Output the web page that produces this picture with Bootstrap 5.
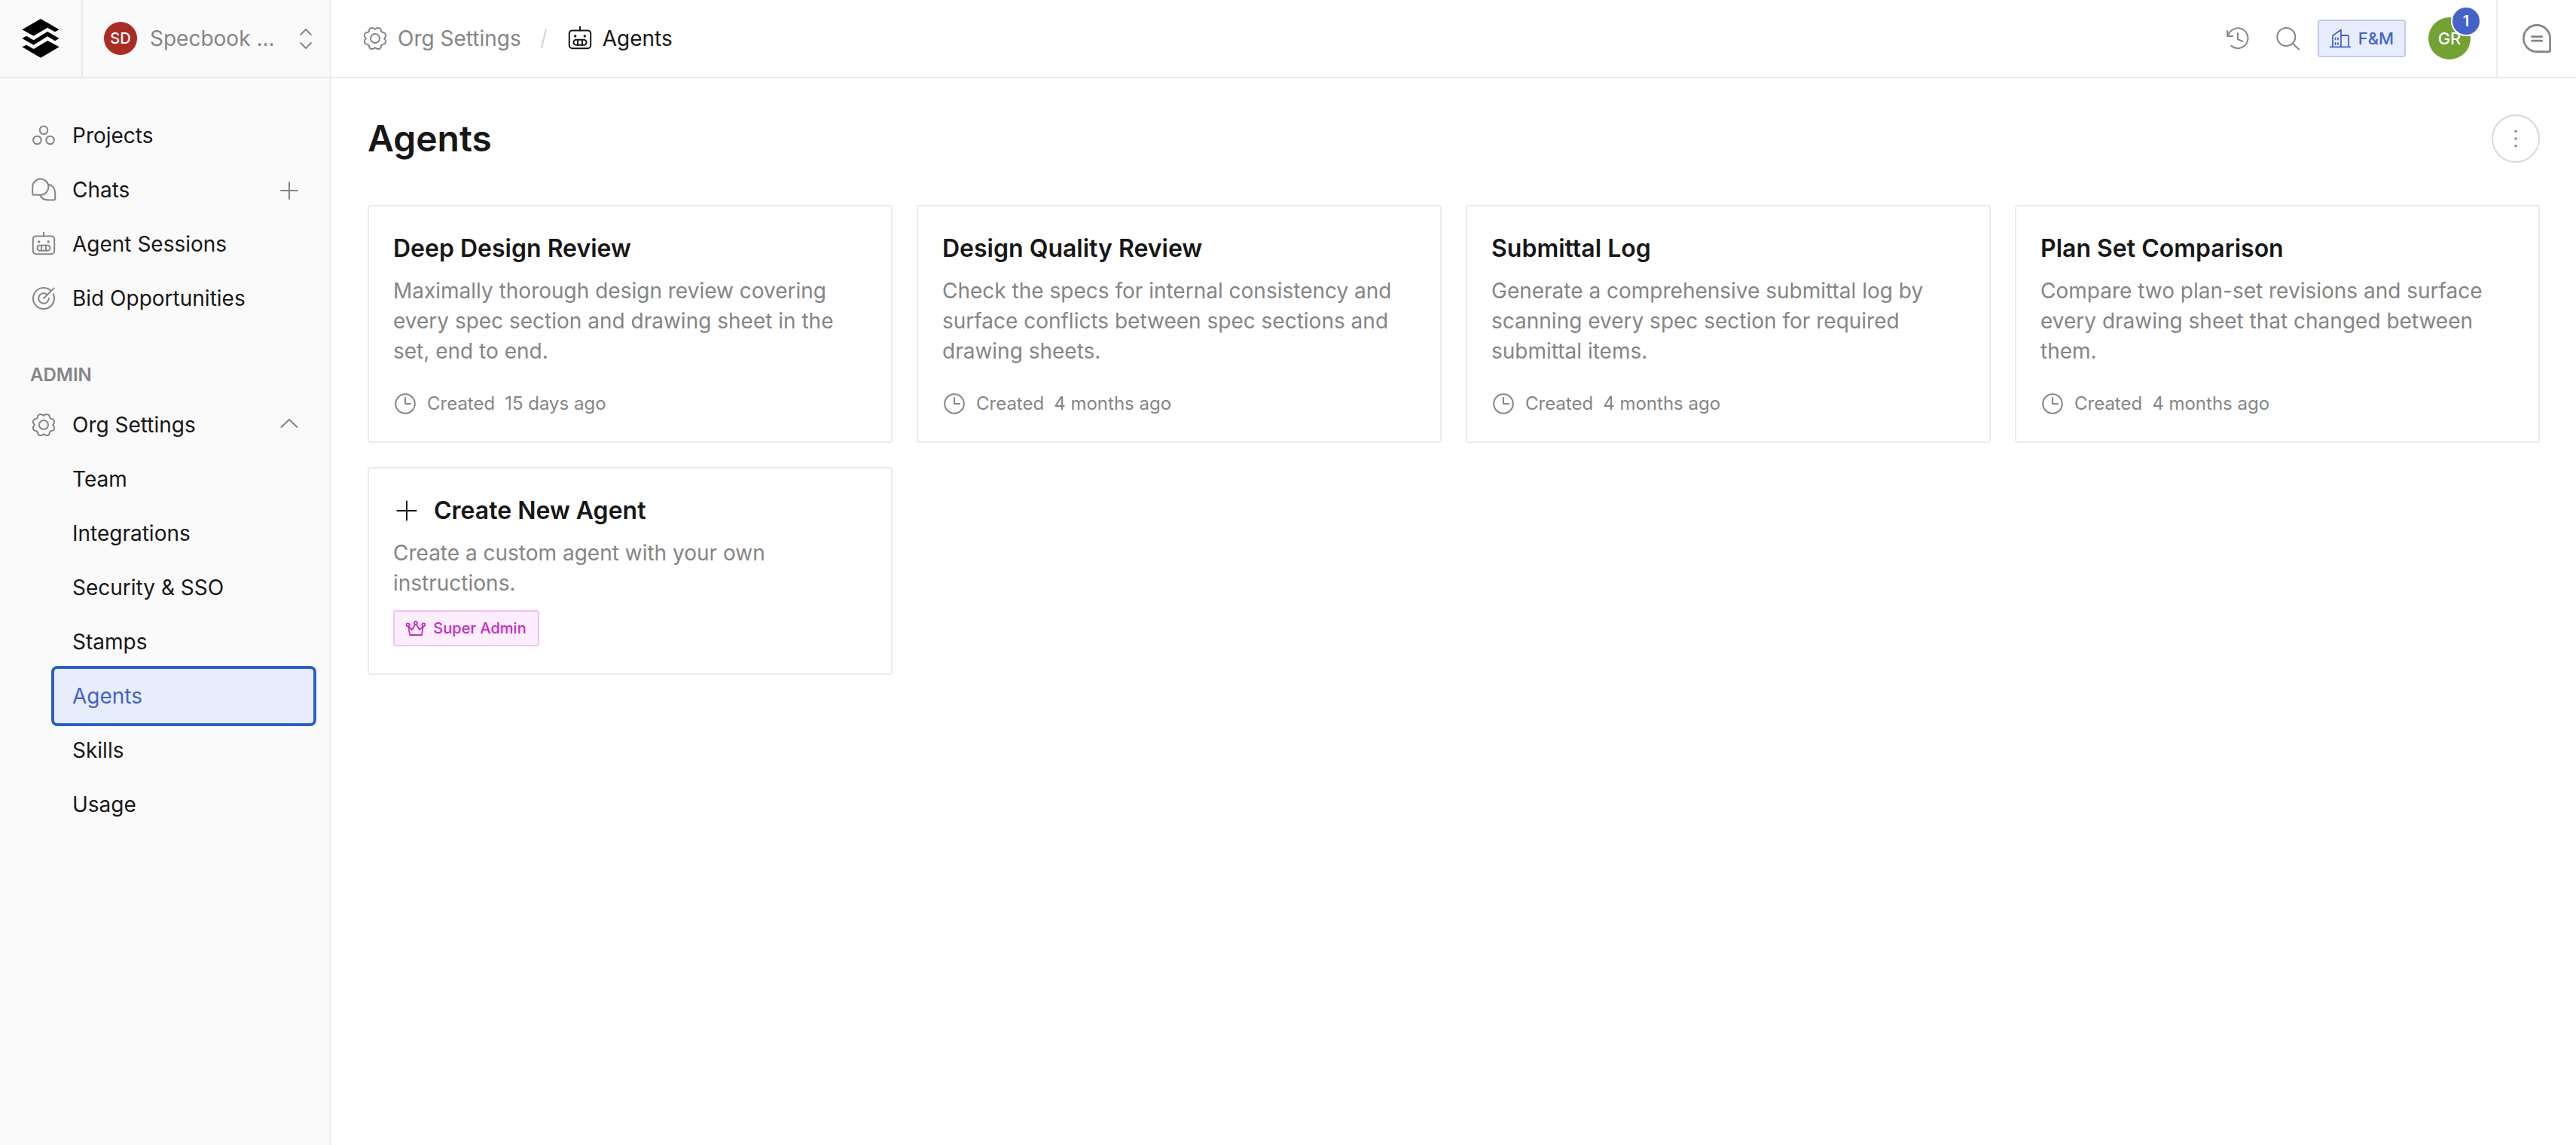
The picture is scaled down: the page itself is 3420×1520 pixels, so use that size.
<!DOCTYPE html>
<html lang="en">
<head>
<meta charset="utf-8">
<meta name="viewport" content="width=device-width, initial-scale=1">
<title>Agents</title>
<link href="https://cdn.jsdelivr.net/npm/bootstrap@5.3.0/dist/css/bootstrap.min.css" rel="stylesheet">
<style>
:root{--ink:#171717;--muted:#858585;--line:#ebebeb;--blue:#4562c8}
body{font-family:Inter,"Noto Sans",sans-serif;font-size:28px;line-height:40px;color:var(--ink);background:#fff}
svg{display:block;flex:none;fill:none;stroke:currentColor;stroke-width:2;stroke-linecap:round;stroke-linejoin:round;overflow:visible}
.dot{fill:currentColor;stroke:none}
.topbar{height:104px;border-bottom:2px solid var(--line)}
.muted{color:var(--muted)}
.side{width:440px;background:#fafafa;border-right:2px solid var(--line)}
.brand{width:110px;border-right:2px solid var(--line)}
.org{padding:0 15px 0 28px}
.org-name{margin-left:17px}
.avatar{width:44px;height:44px;border-radius:50%;background:#a92c25;color:#fff;font-size:20px;font-weight:500;line-height:1}
.user{width:56px;height:56px;background:#73a132;font-size:22px}
.count{width:36px;height:36px;border-radius:50%;background:var(--blue);color:#fff;font-size:20px;font-weight:600;line-height:1;top:-13px;right:-12px;box-shadow:0 0 0 2px #fff}
.side-nav{padding:40px 22px 0 26px}
.side-nav .nav-link{height:72px;padding:0 16px;color:var(--ink);border-radius:4px}
.side-nav .nav-link svg{color:var(--muted)}
.label{margin-left:22px}
.sub{margin-left:46px}
.sub .nav-link{padding:0 24px}
.sub .nav-link.active{background:#e8edfd;color:var(--blue);outline:4px solid #2860c8;box-shadow:0 0 0 6px #fff}
.group-title{height:61px;padding:0 14px;margin-top:35px;font-size:24px;font-weight:600;color:var(--muted)}
.crumbs{padding-left:42px}
.plan{width:117px;height:50px;margin-right:30px;border:2px solid #bfcbf2;border-radius:4px;background:#e8edfd;color:var(--blue);font-size:22px;line-height:1;font-weight:500}
.chat-cell{width:106px;border-left:2px solid var(--line)}
.page-body{padding:48px 48px 0}
.page-title{font-size:48px;line-height:64px;font-weight:600}
.more{width:64px;height:64px;border:2px solid #d9d9d9;border-radius:50%;color:var(--muted)}
.agents{--bs-gutter-x:32px;--bs-gutter-y:32px;margin-top:24px}
.agent{border:2px solid var(--line);border-radius:4px;padding:32px;height:316px}
.agent h2{font-size:32px;line-height:48px;font-weight:600;margin-bottom:12px}
.agent p{margin:0;color:var(--muted)}
.created{font-size:24px;line-height:36px;color:var(--muted)}
.agent-new{height:276px}
.role{width:194px;height:48px;margin-top:16px;border:2px solid #f4c0f4;border-radius:4px;background:#fceefd;color:#c829c8;font-size:20px;line-height:1;font-weight:500}
</style>
</head>
<body>
<svg width="0" height="0" class="position-absolute" aria-hidden="true">
  <symbol id="gear" viewBox="-16 -16 32 32">
    <g id="quarter"><path d="M0-12.4C1.5-12.4 1.8-14.2 3.4-14.1C5-14 7-13.4 7.4-12.5C7.9-11.2 7.5-9.9 8.7-8.7C9.9-7.5 11.2-7.9 12.5-7.4C13.4-7 14-5 14.1-3.4C14.2-1.8 12.4-1.5 12.4 0"/></g>
    <use href="#quarter" transform="rotate(90)"/><use href="#quarter" transform="rotate(180)"/><use href="#quarter" transform="rotate(270)"/>
    <circle r="6"/>
  </symbol>
  <symbol id="robot" viewBox="-16 -16 32 32">
    <rect x="-14.2" y="-10.6" width="28.4" height="23.8" rx="4"/><path d="M0-15.5V-10.6M-2.9 1.7v7M2.9 1.7v7"/>
    <rect x="-8.5" y="1.7" width="17" height="7" rx="3.5"/><circle class="dot" cx="-6.3" cy="-3" r="1.7"/><circle class="dot" cx="6.3" cy="-3" r="1.7"/>
  </symbol>
  <symbol id="clock" viewBox="-16 -16 32 32"><circle r="12.8"/><path d="M0-8V0H7"/></symbol>
</svg>

<div class="d-flex min-vh-100">
  <aside class="side flex-shrink-0">
    <div class="topbar d-flex">
      <a class="brand d-flex align-items-center justify-content-center" href="#" aria-label="Home">
        <svg width="50" height="52" viewBox="87 75 150 156" style="color:#000"><g class="dot"><path d="M162 75L236 118L219 127L189 110L134 143L88 118Z"/><path d="M88 153L105 143L134 160L189 126L236 153L219 163L189 145L134 179Z"/><path d="M88 187L105 179L134 195L190 162L236 187L162 230Z"/></g></svg>
      </a>
      <div class="org d-flex align-items-center flex-fill muted">
        <span class="avatar d-flex align-items-center justify-content-center">SD</span>
        <span class="org-name">Specbook ...</span>
        <svg class="ms-auto" width="34" height="32" viewBox="-17 -16 34 32"><path d="M-6.8-5L0-12L6.8-5M-6.8 6L0 13L6.8 6"/></svg>
      </div>
    </div>
    <nav class="side-nav nav flex-column flex-nowrap">
      <a class="nav-link d-flex align-items-center" href="#"><svg width="32" height="32" viewBox="-16 -16 32 32"><circle cy="-7.3" r="5.3"/><circle cx="-8.6" cy="6" r="5.3"/><circle cx="8.6" cy="6" r="5.3"/></svg><span class="label">Projects</span></a>
      <a class="nav-link d-flex align-items-center" href="#"><svg width="32" height="32" viewBox="-16 -16 32 32"><path d="M-14.8-3.8A10.6 10.6 0 1 1-4.4 6.8H-13.4q-1.4 0-1.4-1.4ZM5.6-7.2C11.4-6.5 15.2-2 15.2 4V12.2q0 1.4-1.4 1.4H6C1 13.6-3 11.2-4.8 7"/></svg><span class="label">Chats</span><svg class="ms-auto" width="32" height="32" viewBox="-16 -17 32 32"><path d="M-11 0H11M0-11V11"/></svg></a>
      <a class="nav-link d-flex align-items-center" href="#"><svg width="32" height="32"><use href="#robot"/></svg><span class="label">Agent Sessions</span></a>
      <a class="nav-link d-flex align-items-center" href="#"><svg width="32" height="32" viewBox="-16 -16 32 32"><path d="M12.8-5.6A14 14 0 1 1 8.6-11M6.8 0A6.8 6.8 0 1 1 3.2-6M0 0L13.6-13.4"/></svg><span class="label">Bid Opportunities</span></a>
      <div class="group-title d-flex align-items-center">ADMIN</div>
      <a class="nav-link d-flex align-items-center" href="#"><svg width="32" height="32"><use href="#gear"/></svg><span class="label">Org Settings</span><svg class="ms-auto" width="32" height="32" viewBox="-16 -16 32 32"><path d="M-10.5 3L0-7L10.5 3"/></svg></a>
      <div class="sub">
        <a class="nav-link d-flex align-items-center" href="#">Team</a>
        <a class="nav-link d-flex align-items-center" href="#">Integrations</a>
        <a class="nav-link d-flex align-items-center" href="#">Security &amp; SSO</a>
        <a class="nav-link d-flex align-items-center" href="#">Stamps</a>
        <a class="nav-link d-flex align-items-center active" href="#">Agents</a>
        <a class="nav-link d-flex align-items-center" href="#">Skills</a>
        <a class="nav-link d-flex align-items-center" href="#">Usage</a>
      </div>
    </nav>
  </aside>

  <div class="flex-fill">
    <header class="topbar d-flex">
      <div class="crumbs d-flex align-items-center flex-fill">
        <svg class="muted" width="32" height="32"><use href="#gear"/></svg>
        <span class="muted" style="margin-left:14px">Org Settings</span>
        <svg width="8" height="26" viewBox="0 0 8 26" style="color:#d2d2d2;margin:0 28px 0 26px"><path d="M1 25L7 1"/></svg>
        <svg width="32" height="32"><use href="#robot"/></svg>
        <span style="margin-left:14px">Agents</span>
      </div>
      <div class="d-flex align-items-center muted">
        <svg width="32" height="32" viewBox="-16 -16 32 32" style="margin-right:34px"><path d="M-13.8-10V-3H-6.8M-13-3.4A13.4 13.4 0 1 1-8.8 9.8M0-7V1.2L6 4"/></svg>
        <svg width="32" height="32" viewBox="-16 -16 32 32" style="margin-right:24px"><circle cx="-1.7" cy="-2" r="12"/><path d="M7 6.8L15 14.5"/></svg>
        <span class="plan d-flex align-items-center justify-content-center"><svg width="28" height="26" viewBox="0 0 28 26" style="margin-right:10px;stroke-width:1.8"><path d="M.8 24.4H27.2M4 24V9.4L15 1.6V24M15 9H23.6q1.4 0 1.4 1.4V24M7.6 12.4v2M11 12.4v2M7.6 19v2M11 19v2"/></svg>F&amp;M</span>
        <span class="avatar user d-flex align-items-center justify-content-center position-relative" style="margin-right:34px">GR<span class="count position-absolute d-flex align-items-center justify-content-center">1</span></span>
      </div>
      <div class="chat-cell d-flex align-items-center justify-content-center muted">
        <svg width="38" height="38" viewBox="-19 -19 38 38" style="stroke-width:2.7"><path d="M17.6 0V16q0 1.6-1.6 1.6H0A17.6 17.6 0 1 1 17.6 0ZM-6.6-2.4H6.8M-6.6 3.2H6.8"/></svg>
      </div>
    </header>

    <main class="page-body">
      <div class="d-flex align-items-center justify-content-between">
        <h1 class="page-title m-0">Agents</h1>
        <button class="more bg-transparent p-0 d-flex align-items-center justify-content-center" aria-label="More"><svg width="4" height="24" viewBox="-2 -12 4 24"><g class="dot"><circle cy="-9.7" r="1.7"/><circle r="1.7"/><circle cy="9.7" r="1.7"/></g></svg></button>
      </div>
      <div class="row agents">
        <div class="col-3"><article class="agent d-flex flex-column"><h2>Deep Design Review</h2><p>Maximally thorough design review covering<br>every spec section and drawing sheet in the<br>set, end to end.</p><div class="created d-flex align-items-center mt-auto"><svg width="32" height="32"><use href="#clock"/></svg><span style="margin:0 13px">Created</span><span>15 days ago</span></div></article></div>
        <div class="col-3"><article class="agent d-flex flex-column"><h2>Design Quality Review</h2><p>Check the specs for internal consistency and<br>surface conflicts between spec sections and<br>drawing sheets.</p><div class="created d-flex align-items-center mt-auto"><svg width="32" height="32"><use href="#clock"/></svg><span style="margin:0 13px">Created</span><span>4 months ago</span></div></article></div>
        <div class="col-3"><article class="agent d-flex flex-column"><h2>Submittal Log</h2><p>Generate a comprehensive submittal log by<br>scanning every spec section for required<br>submittal items.</p><div class="created d-flex align-items-center mt-auto"><svg width="32" height="32"><use href="#clock"/></svg><span style="margin:0 13px">Created</span><span>4 months ago</span></div></article></div>
        <div class="col-3"><article class="agent d-flex flex-column"><h2>Plan Set Comparison</h2><p>Compare two plan-set revisions and surface<br>every drawing sheet that changed between<br>them.</p><div class="created d-flex align-items-center mt-auto"><svg width="32" height="32"><use href="#clock"/></svg><span style="margin:0 13px">Created</span><span>4 months ago</span></div></article></div>
        <div class="col-3"><article class="agent agent-new"><h2 class="d-flex align-items-center"><svg width="36" height="36" viewBox="-18 -18 36 36" style="margin-right:18px"><path d="M0-12.6V12.6M-12.6 0H12.6"/></svg>Create New Agent</h2><p>Create a custom agent with your own<br>instructions.</p><span class="role d-flex align-items-center justify-content-center"><svg width="26" height="22" viewBox="-13 -11 26 22" style="margin-right:10px;stroke-width:1.8"><circle cy="-7" r="2"/><circle cx="-10.4" cy="-4.6" r="2"/><circle cx="10.4" cy="-4.6" r="2"/><path d="M-9.8-2.6L-7.8 9H7.8L9.8-2.6L5 2L.8-5M-.8-5L-5 2L-9.8-2.6"/></svg>Super Admin</span></article></div>
      </div>
    </main>
  </div>
</div>
<script src="https://cdn.jsdelivr.net/npm/bootstrap@5.3.0/dist/js/bootstrap.bundle.min.js"></script>
</body>
</html>
